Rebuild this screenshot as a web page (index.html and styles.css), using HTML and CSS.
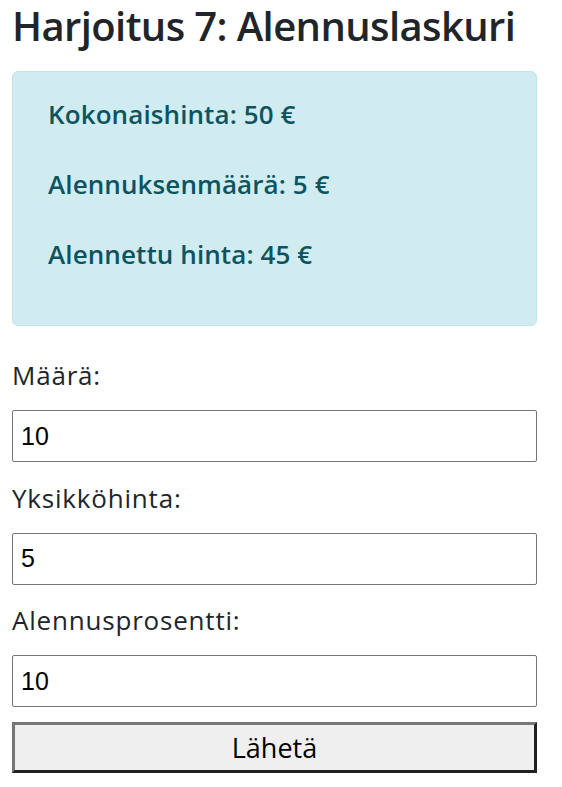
FILE: index.html
```html
<!DOCTYPE html>
<html lang="fi">
<head>
<meta charset="utf-8">
<title>Harjoitus 7: Alennuslaskuri</title>
<link rel="stylesheet" href="styles.css">
</head>
<body>
<div class="container">
  <h1 class="title">Harjoitus 7: Alennuslaskuri</h1>
  <div class="alert">
    <p class="result">Kokonaishinta: 50 €</p>
    <p class="result">Alennuksenmäärä: 5 €</p>
    <p class="result">Alennettu hinta: 45 €</p>
  </div>
  <form class="form">
    <label class="label" for="maara">Määrä:</label>
    <input class="field" id="maara" type="text" value="10">
    <label class="label" for="hinta">Yksikköhinta:</label>
    <input class="field" id="hinta" type="text" value="5">
    <label class="label" for="ale">Alennusprosentti:</label>
    <input class="field field-last" id="ale" type="text" value="10">
    <button class="submit" type="button">Lähetä</button>
  </form>
</div>
</body>
</html>
```

FILE: styles.css
```css
html, body {
  margin: 0;
  padding: 0;
  background: #ffffff;
}

body {
  font-family: "Open Sans", "Noto Sans", sans-serif;
  color: #212529;
}

.container {
  width: 525px;
  margin-left: 12px;
  padding-top: 2px;
}

.title {
  margin: 0 0 21px;
  font-size: 40px;
  line-height: 48px;
  font-weight: 600;
  letter-spacing: -0.6px;
  color: #212529;
}

.alert {
  background: #d1ecf1;
  border: 1px solid #bee5eb;
  border-radius: 6px;
  padding: 25px 35px 18px;
  color: #0c5460;
}

.result {
  margin: 0 0 36px;
  font-size: 26px;
  line-height: 34px;
  font-weight: 600;
  letter-spacing: 0.1px;
}

.form {
  display: flex;
  flex-direction: column;
  margin-top: 31px;
}

.label {
  display: block;
  font-size: 26px;
  line-height: 36px;
  letter-spacing: 0.8px;
  margin-bottom: 17px;
  color: #212529;
}

.field {
  box-sizing: border-box;
  width: 525px;
  height: 52px;
  margin: 0 0 17.5px;
  padding: 0 8px;
  border: 1px solid #767676;
  border-radius: 2px;
  font-family: "Liberation Sans", Arial, sans-serif;
  font-size: 25px;
  color: #000000;
  background: #ffffff;
}

.field-last {
  margin-bottom: 15px;
}

.submit {
  box-sizing: border-box;
  width: 525px;
  height: 51px;
  margin: 0;
  padding: 0;
  border-style: solid;
  border-width: 3px;
  border-color: #767676 #202020 #202020 #767676;
  background: #efefef;
  font-family: "Open Sans", "Noto Sans", sans-serif;
  font-size: 27px;
  line-height: 1;
  color: #000000;
}
```
